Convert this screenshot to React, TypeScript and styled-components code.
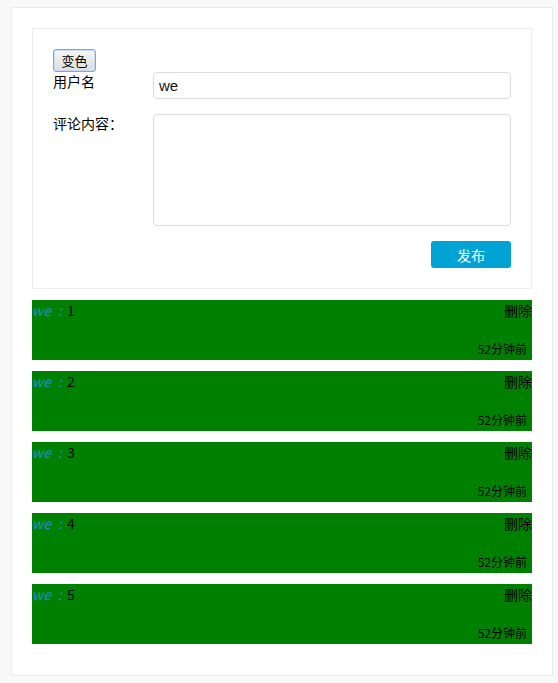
import React from "react";
import styled, { createGlobalStyle } from "styled-components";

const Global = createGlobalStyle`
  html, body { margin: 0; padding: 0; background: #f9f9f9; }
  body { font-family: "Noto Sans CJK SC", "Microsoft YaHei", sans-serif; font-size: 14px; color: #000; }
  * { box-sizing: border-box; }
`;

const Panel = styled.div`
  width: 542px;
  margin: 7px 0 8px 11px;
  padding: 20px 20px 20px;
  background: #fff;
  border: 1px solid #ececec;
`;

const FormBox = styled.div`
  border: 1px solid #ececec;
  padding: 20px;
  display: flex;
  flex-direction: column;
`;

const ToggleButton = styled.button`
  align-self: flex-start;
  width: 43px;
  height: 23px;
  padding: 0;
  font-family: "Noto Sans CJK SC", sans-serif;
  font-size: 13px;
  line-height: 21px;
  color: #000;
  background: linear-gradient(#f6f6f6, #dedede);
  border: 1px solid #7aa7e0;
  border-radius: 3px;
  box-shadow: inset 0 0 0 1px #c6dcf6;
`;

const Row = styled.div<{ $gap?: number }>`
  display: flex;
  align-items: flex-start;
  margin-top: ${(p) => p.$gap ?? 0}px;
`;

const Label = styled.label`
  width: 100px;
  flex: none;
  line-height: 18px;
  font-size: 14px;
`;

const TextInput = styled.input`
  flex: 1;
  height: 27px;
  border: 1px solid #dcdcdc;
  border-radius: 4px;
  padding: 0 5px;
  font-family: "Liberation Sans", Arial, sans-serif;
  font-size: 15px;
  color: #111;
  outline: none;
`;

const TextArea = styled.textarea`
  flex: 1;
  height: 112px;
  border: 1px solid #dcdcdc;
  border-radius: 4px;
  resize: none;
  outline: none;
`;

const Actions = styled.div`
  display: flex;
  justify-content: flex-end;
  margin-top: 15px;
`;

const SubmitButton = styled.button`
  width: 80px;
  height: 27px;
  border: none;
  border-radius: 3px;
  background: #00a3d3;
  color: #fff;
  font-family: "Noto Sans CJK SC", sans-serif;
  font-size: 14px;
  padding: 0;
`;

const List = styled.div`
  display: flex;
  flex-direction: column;
  gap: 11px;
  padding: 11px 0;
`;

const Item = styled.div`
  height: 60px;
  background: #008000;
  display: flex;
  flex-direction: column;
  justify-content: space-between;
`;

const Top = styled.div`
  display: flex;
  line-height: 20px;
  font-size: 14px;
`;

const Name = styled.span`
  color: #1a8fd0;
  font-style: italic;
  word-spacing: 4px;
  margin-right: 5px;
`;

const Content = styled.span`
  flex: 1;
`;

const Delete = styled.span`
  cursor: pointer;
`;

const Time = styled.div`
  align-self: flex-end;
  font-size: 12px;
  line-height: 18px;
  padding: 0 5px 2px 0;
`;

const comments = ["1", "2", "3", "4", "5"];

export default function App() {
  return (
    <>
      <Global />
      <Panel>
        <FormBox>
          <ToggleButton>变色</ToggleButton>
          <Row>
            <Label>用户名</Label>
            <TextInput defaultValue="we" />
          </Row>
          <Row $gap={15}>
            <Label>评论内容：</Label>
            <TextArea />
          </Row>
          <Actions>
            <SubmitButton>发布</SubmitButton>
          </Actions>
        </FormBox>
        <List>
          {comments.map((c) => (
            <Item key={c}>
              <Top>
                <Name>we :</Name>
                <Content>{c}</Content>
                <Delete>删除</Delete>
              </Top>
              <Time>52分钟前</Time>
            </Item>
          ))}
        </List>
      </Panel>
    </>
  );
}
